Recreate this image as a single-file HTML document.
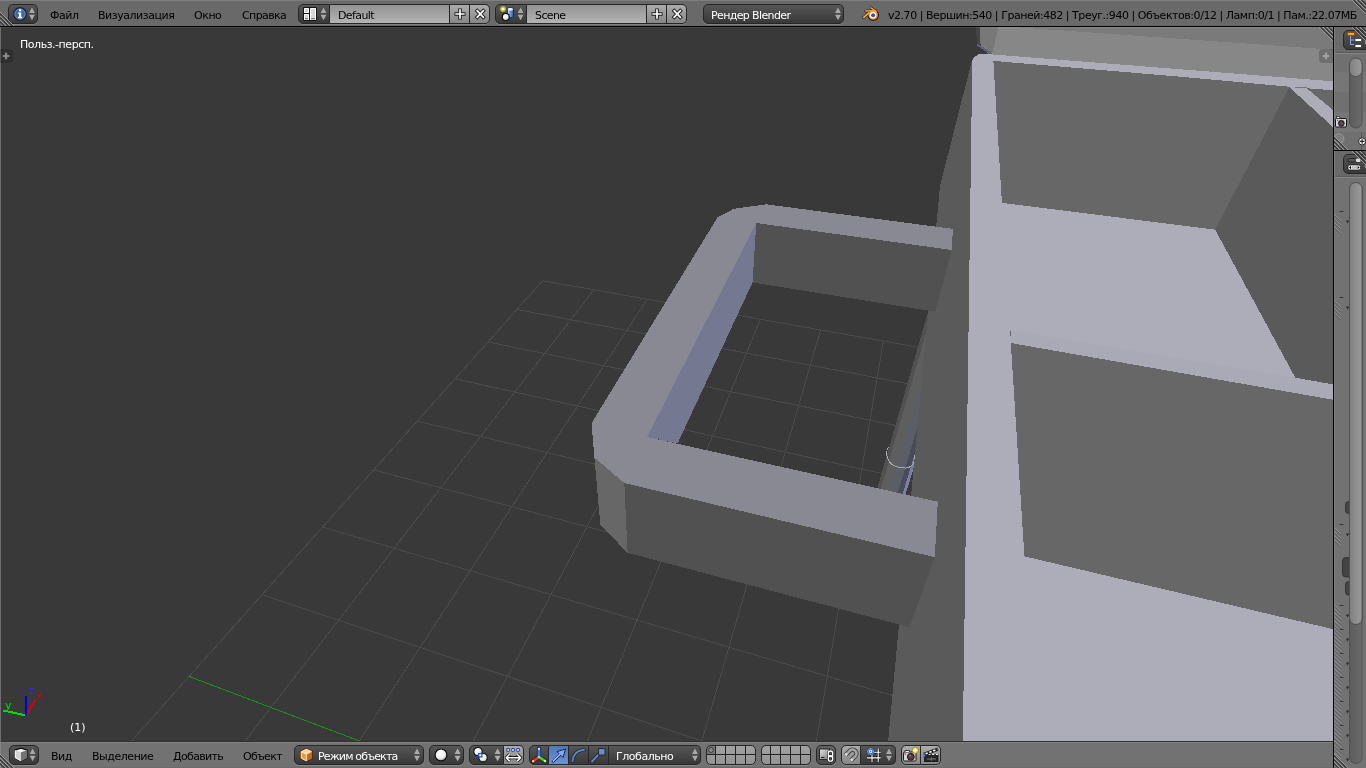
<!DOCTYPE html>
<html lang="ru"><head><meta charset="utf-8"><title>Blender</title>
<style>
html,body{margin:0;padding:0}
body{width:1366px;height:768px;overflow:hidden;position:relative;background:#727272;font-family:"DejaVu Sans","Liberation Sans",sans-serif;font-size:11px;color:#000}
.abs{position:absolute}
.hdr{position:absolute;left:0;width:1366px;background:#727272}
.t{position:absolute;white-space:nowrap;line-height:14px;height:14px;letter-spacing:-0.46px;will-change:transform}
.btn{position:absolute;box-sizing:border-box;height:20px;border:1px solid #262626;box-shadow:0 1px 0 rgba(255,255,255,.16)}
.dk{background:linear-gradient(#565656,#383838);color:#fff}
.lt{background:linear-gradient(#acacac,#868686)}
.tf{background:linear-gradient(#929292,#b4b4b4)}
.sel{background:linear-gradient(#4f78b8,#6a93d2)}
.rl{border-radius:5px 0 0 5px}.rr{border-radius:0 5px 5px 0}.ra{border-radius:5px}
.nl{border-left:none}
svg{display:block}
</style></head><body>
<svg width="1366" height="768" viewBox="0 0 1366 768" style="position:absolute;left:0;top:0" shape-rendering="auto">
<defs><clipPath id="vp"><rect x="1" y="27" width="1332" height="715"/></clipPath></defs>
<g clip-path="url(#vp)" shape-rendering="crispEdges">
<rect x="0" y="27" width="1334" height="715" fill="#393939"/>
<line x1="542.7" y1="280.7" x2="96.6" y2="780.0" stroke="#4a4a4a" stroke-width="1"/>
<line x1="593.9" y1="289.8" x2="215.0" y2="780.0" stroke="#4a4a4a" stroke-width="1"/>
<line x1="647.2" y1="299.2" x2="333.7" y2="780.0" stroke="#4a4a4a" stroke-width="1"/>
<line x1="702.6" y1="309.0" x2="452.5" y2="780.0" stroke="#4a4a4a" stroke-width="1"/>
<line x1="760.4" y1="319.3" x2="571.4" y2="780.0" stroke="#4a4a4a" stroke-width="1"/>
<line x1="820.5" y1="329.9" x2="690.6" y2="780.0" stroke="#4a4a4a" stroke-width="1"/>
<line x1="883.3" y1="341.0" x2="809.9" y2="780.0" stroke="#4a4a4a" stroke-width="1"/>
<line x1="948.9" y1="352.6" x2="929.3" y2="780.0" stroke="#4a4a4a" stroke-width="1"/>
<line x1="1017.4" y1="364.8" x2="1048.9" y2="780.0" stroke="#4a4a4a" stroke-width="1"/>
<line x1="1089.0" y1="377.5" x2="1168.7" y2="780.0" stroke="#4a4a4a" stroke-width="1"/>
<line x1="1164.1" y1="390.8" x2="1288.7" y2="780.0" stroke="#4a4a4a" stroke-width="1"/>
<line x1="1242.8" y1="404.7" x2="1360.0" y2="669.6" stroke="#4a4a4a" stroke-width="1"/>
<line x1="1325.4" y1="419.3" x2="1360.0" y2="480.6" stroke="#4a4a4a" stroke-width="1"/>
<line x1="542.7" y1="280.7" x2="1360.0" y2="425.5" stroke="#4a4a4a" stroke-width="1"/>
<line x1="516.9" y1="309.5" x2="1360.0" y2="469.6" stroke="#4a4a4a" stroke-width="1"/>
<line x1="487.9" y1="342.0" x2="1360.0" y2="520.5" stroke="#4a4a4a" stroke-width="1"/>
<line x1="455.0" y1="378.8" x2="1360.0" y2="579.6" stroke="#4a4a4a" stroke-width="1"/>
<line x1="417.3" y1="421.1" x2="1360.0" y2="649.3" stroke="#4a4a4a" stroke-width="1"/>
<line x1="373.6" y1="469.9" x2="1360.0" y2="732.5" stroke="#4a4a4a" stroke-width="1"/>
<line x1="322.6" y1="527.1" x2="1178.2" y2="780.0" stroke="#4a4a4a" stroke-width="1"/>
<line x1="262.0" y1="594.8" x2="819.6" y2="780.0" stroke="#4a4a4a" stroke-width="1"/>
<line x1="189.1" y1="676.5" x2="462.5" y2="780.0" stroke="#179319" stroke-width="1"/>
<line x1="99.5" y1="776.7" x2="106.9" y2="780.0" stroke="#4a4a4a" stroke-width="1"/>
<polygon points="979.7,27.0 1334.0,27.0 1334.0,86.0 1180.0,74.0 992.2,58.0 979.7,43.4" fill="#878787"/>
<polygon points="979.7,27.0 998.4,27.0 992.2,53.6 979.7,43.4" fill="#787878"/>
<polygon points="1013.0,27.0 1334.0,27.0 1334.0,49.8 1180.0,38.8" fill="#7a7a7a"/>
<polygon points="976.0,27.0 979.7,27.0 979.7,43.4 977.0,44.0" fill="#444"/>
<line x1="977.3" y1="44.7" x2="991.8" y2="54" stroke="#5b607b" stroke-width="2"/>
<polygon points="930.0,305.0 874.0,500.0 877.7,500.0 934.2,305.0" fill="#515151"/>
<polygon points="934.2,305.0 877.7,500.0 886.8,500.0 944.3,305.0" fill="#5e5e5e"/>
<polygon points="944.3,305.0 886.8,500.0 895.6,500.0 954.2,305.0" fill="#5a5e67"/>
<polygon points="954.2,305.0 895.6,500.0 900.8,500.0 959.9,305.0" fill="#484b5a"/>
<polygon points="959.9,305.0 900.8,500.0 903.9,500.0 963.3,305.0" fill="#7a80a1"/>
<path d="M888.4,447.3 C886,451 885.8,457 890,462.7 C893,466 897.5,467.6 905.6,468.1 C909,468 912.5,466.5 914.4,461 C915,459 915,457 914.7,455" fill="none" stroke="#a9a9b9" stroke-width="1"/>
<polygon points="971.8,61.0 940.0,186.0 888.0,742.0 963.8,742.0 973.0,61.0" fill="#5a5a5a"/>
<polygon points="756.3,223.0 951.9,250.0 935.2,311.7 752.5,282.5" fill="#515151"/>
<polygon points="756.3,223.0 752.5,282.5 677.6,443.5 647.0,437.0" fill="#747991"/>
<polygon points="717.5,217.5 733.8,208.8 766.3,204.3 952.8,228.9 951.9,250.0 756.3,223.0 647.0,437.0 937.8,501.7 934.8,557.2 624.3,483.0 594.4,457.6 591.5,423.2" fill="#898994"/>
<polygon points="624.3,483.0 934.8,557.2 909.4,627.3 627.6,552.8" fill="#515151"/>
<polygon points="594.4,457.6 624.3,483.0 627.6,552.8 600.4,525.0" fill="#676767"/>
<polygon points="972.3,60.0 975.2,56.3 979.2,54.0 982.0,53.6 1334.0,81.4 1334.0,742.0 962.8,742.0" fill="#adacb9"/>
<polygon points="993.4,60.9 1180.0,76.7 1289.4,86.7 1289.6,87.4 1215.2,229.7 1001.9,202.8" fill="#676767"/>
<polygon points="1289.4,87.2 1334.0,128.0 1334.0,384.6 1295.3,377.7 1215.2,229.7" fill="#5a5a5a"/>
<polygon points="1306.6,88.2 1334.0,90.4 1334.0,110.8" fill="#676767"/>
<polygon points="1010.8,343.0 1334.0,399.9 1334.0,629.4 1024.4,556.3" fill="#676767"/>
<polygon points="1010.8,330.0 1295.3,377.7 1334.0,384.6 1334.0,399.9 1010.8,343.0" fill="#aaaab6"/>
<line x1="1295" y1="87.5" x2="1306.5" y2="87.5" stroke="#777" stroke-width="1"/>
<line x1="1010.5" y1="330.5" x2="1010.5" y2="336" stroke="#666" stroke-width="1"/>
</g>
</svg>
<!-- ===== top info header ===== -->
<div class="hdr" style="top:0;height:26px;background:#696969"></div>
<div class="abs" style="left:0;top:0;width:1366px;height:1px;background:#7e7e7e"></div>
<div class="abs" style="left:0;top:26px;width:1366px;height:1px;background:#000"></div>

<div class="btn dk ra" style="left:8px;top:4px;width:30px"></div>
<svg class="abs" style="left:12px;top:6px" width="26" height="16" viewBox="0 0 26 16">
 <circle cx="8" cy="8" r="6.3" fill="#3f66a5" stroke="#16233d" stroke-width="1.2"/>
 <circle cx="8" cy="8" r="5" fill="none" stroke="#7f9fd0" stroke-width=".8" opacity=".7"/>
 <rect x="7" y="3.2" width="2.2" height="2.2" fill="#fff"/><path d="M6.2 6.6h3v4.2h1v1.4H6v-1.4h1V8H6.2z" fill="#fff"/>
 <path d="M20 1.4l2.9 5.5h-5.8z M20 14.300l2.9-5.5h-5.8z" fill="#a9a9a9"/>
</svg>
<div class="t" style="left:50px;top:9px">Файл</div>
<div class="t" style="left:98px;top:9px">Визуализация</div>
<div class="t" style="left:194px;top:9px">Окно</div>
<div class="t" style="left:241.5px;top:9px;letter-spacing:-0.6px">Справка</div>

<!-- screen selector -->
<div class="btn dk rl" style="left:298px;top:4px;width:32px"></div>
<svg class="abs" style="left:302px;top:6px" width="26" height="16" viewBox="0 0 26 16">
 <rect x="1" y="1" width="14" height="14" rx="1.300" fill="#141414"/>
 <g fill="#fff"><rect x="2" y="2" width="5" height="5" rx=".6"/><rect x="2" y="8" width="5" height="6" rx=".6"/><rect x="8" y="2" width="6" height="12" rx=".6"/></g>
 <g fill="#d6d6d6"><rect x="3" y="3" width="3" height="3"/><rect x="3" y="9" width="3" height="3.200"/><rect x="9" y="3" width="4" height="9.200"/></g>
 <path d="M3 12.800h3M9 12.800h4" stroke="#4a4a4a" stroke-width="1"/>
 <path d="M21.500 1.400l2.900 5.500h-5.800z M21.500 14.300l2.900-5.500h-5.800z" fill="#a9a9a9"/>
</svg>
<div class="btn tf nl" style="left:330px;top:4px;width:120px"></div>
<div class="t" style="left:337.5px;top:9px;letter-spacing:-0.6px">Default</div>
<div class="btn lt nl" style="left:450px;top:4px;width:20px"></div>
<div class="btn lt nl rr" style="left:470px;top:4px;width:20px"></div>
<svg class="abs" style="left:452px;top:6px" width="36" height="16" viewBox="0 0 36 16">
 <path d="M8 2.5v11M2.5 8h11" stroke="#1a1a1a" stroke-width="3.6"/><path d="M8 3.3v9.4M3.3 8h9.4" stroke="#fff" stroke-width="1.7"/>
 <path d="M24 3.5l8.5 9M32.5 3.5l-8.5 9" stroke="#1a1a1a" stroke-width="3.6"/><path d="M24.6 4.2l7.3 7.6M31.9 4.2l-7.3 7.6" stroke="#fff" stroke-width="1.7"/>
</svg>

<!-- scene selector -->
<div class="btn dk rl" style="left:495px;top:4px;width:32px"></div>
<svg class="abs" style="left:499px;top:5px" width="26" height="18" viewBox="0 0 26 18">
 <defs><linearGradient id="cyg" x1="0" x2="1" y1="0" y2="0"><stop offset="0" stop-color="#dfeaff"/><stop offset=".45" stop-color="#6f9be6"/><stop offset="1" stop-color="#2d5fba"/></linearGradient>
 <radialGradient id="sp2" cx=".38" cy=".35" r=".75"><stop offset="0" stop-color="#fff"/><stop offset=".65" stop-color="#e4e4e4"/><stop offset="1" stop-color="#8c8c8c"/></radialGradient></defs>
 <circle cx="4" cy="4" r="2.300" fill="#fff" stroke="#b4b224" stroke-width="1.500"/>
 <path d="M8.300 4.200c0-2 6.200-2 6.200 0v7c0 1.900-6.200 1.900-6.200 0z" fill="url(#cyg)" stroke="#122a5c" stroke-width="1"/>
 <ellipse cx="11.400" cy="4.300" rx="2.600" ry="1.300" fill="#f4f8ff"/>
 <circle cx="6.800" cy="12" r="3.500" fill="url(#sp2)" stroke="#0c0c0c" stroke-width="1.200"/>
 <path d="M21.600 2.400l2.900 5.500h-5.800z M21.600 15.300l2.900-5.500h-5.800z" fill="#a9a9a9"/>
</svg>
<div class="btn tf nl" style="left:527px;top:4px;width:120px"></div>
<div class="t" style="left:534.5px;top:9px;letter-spacing:-0.6px">Scene</div>
<div class="btn lt nl" style="left:647px;top:4px;width:20px"></div>
<div class="btn lt nl rr" style="left:667px;top:4px;width:20px"></div>
<svg class="abs" style="left:649px;top:6px" width="36" height="16" viewBox="0 0 36 16">
 <path d="M8 2.5v11M2.5 8h11" stroke="#1a1a1a" stroke-width="3.6"/><path d="M8 3.3v9.4M3.3 8h9.4" stroke="#fff" stroke-width="1.7"/>
 <path d="M24 3.5l8.5 9M32.5 3.5l-8.5 9" stroke="#1a1a1a" stroke-width="3.6"/><path d="M24.6 4.2l7.3 7.6M31.9 4.2l-7.3 7.6" stroke="#fff" stroke-width="1.7"/>
</svg>

<!-- render engine -->
<div class="btn dk ra" style="left:703px;top:4px;width:141px"></div>
<div class="t" style="left:711px;top:9px;color:#fff;letter-spacing:-0.62px">Рендер Blender</div>
<svg class="abs" style="left:833px;top:6px" width="10" height="16" viewBox="0 0 10 16"><path d="M5 1.4l2.9 5.5h-5.8z M5 14.300l2.9-5.5h-5.8z" fill="#a9a9a9"/></svg>

<!-- blender logo -->
<svg class="abs" style="left:861.500px;top:5.300px" width="18" height="18" viewBox="0 0 18 18">
 <defs><linearGradient id="blg" x1="0" y1="0" x2="1" y2="1"><stop offset="0" stop-color="#ffc27a"/><stop offset=".55" stop-color="#f6901e"/><stop offset="1" stop-color="#e87a0c"/></linearGradient></defs>
 <g fill="none" stroke="#2a1a08" stroke-linecap="round"><path d="M3.600 6.100l7.400-.3" stroke-width="2.700"/><path d="M8.900 2.900l5.300 3.400" stroke-width="2.700"/><path d="M1.700 12.500l5-4.500" stroke-width="2.900"/></g>
 <circle cx="11.250" cy="10.100" r="5.300" fill="url(#blg)" stroke="#2a1a08" stroke-width="1.100"/>
 <g fill="none" stroke="#f8a040" stroke-linecap="round"><path d="M3.600 6.100l7.400-.3" stroke-width="1.500"/><path d="M8.900 2.900l5.300 3.400" stroke-width="1.500"/><path d="M1.700 12.500l5-4.500" stroke-width="1.700"/></g>
 <circle cx="11.100" cy="10.200" r="3.200" fill="#fff"/><circle cx="11.100" cy="10.200" r="2" fill="#2458b4"/>
</svg>
<div class="t" style="left:888px;top:9px">v2.70 | Вершин:540 | Граней:482 | Треуг.:940 | Объектов:0/12 | Ламп:0/1 | Пам.:22.07МБ</div>
<!-- ===== 3D view header (bottom) ===== -->
<div class="hdr" style="top:742px;height:26px"></div>
<div class="abs" style="left:0;top:741px;width:1333px;height:1px;background:#303030"></div>
<div class="abs" style="left:0;top:742px;width:1333px;height:1px;background:#808080"></div>
<div class="abs" style="left:0;top:767px;width:1333px;height:1px;background:#6b6b6b"></div>
<div class="abs" style="left:0;top:742px;width:1px;height:26px;background:#858585"></div>
<div class="btn dk ra" style="left:9px;top:745px;width:30px"></div>
<svg class="abs" style="left:12px;top:747px" width="26" height="16" viewBox="0 0 26 16">
 <path d="M2.800 3.200L9 1.200l6.200 2v7.800L9 14.300 2.800 11z" fill="#f4f4f4" stroke="#0f0f0f" stroke-width="1.300" stroke-linejoin="round"/>
 <path d="M9 5.200l6.200-2v7.800L9 14.300z" fill="#747474"/><path d="M2.800 3.200l6.200 2v9.100L2.800 11z" fill="#d4d4d4"/><path d="M3.300 3.600v7.100l5.400 3" fill="none" stroke="#fff" stroke-width=".9"/>
 <path d="M20.600 1.400l2.900 5.500h-5.800z M20.600 14.300l2.900-5.500h-5.800z" fill="#a9a9a9"/>
</svg>
<div class="t" style="left:51px;top:750px">Вид</div>
<div class="t" style="left:92px;top:750px">Выделение</div>
<div class="t" style="left:173px;top:750px;letter-spacing:-0.66px">Добавить</div>
<div class="t" style="left:243px;top:750px;letter-spacing:-0.7px">Объект</div>

<!-- mode -->
<div class="btn dk ra" style="left:294px;top:745px;width:130px"></div>
<svg class="abs" style="left:298px;top:747px" width="17" height="16" viewBox="0 0 17 16">
 <path d="M8.400 1.600L14.200 4.300v7.200L8.400 14.400 2.700 11.500V4.300z" fill="#e8973a" stroke="#2c1604" stroke-width="1.300" stroke-linejoin="round"/>
 <path d="M8.400 1.600L14.200 4.300 8.400 7.200 2.700 4.300z" fill="#fbd3a0"/><path d="M8.400 7.200l5.800-2.900v7.200L8.400 14.400z" fill="#c06c14"/><path d="M2.700 4.300l5.700 2.900v7.200L2.700 11.500z" fill="#eb9c42"/>
 <path d="M3.300 4.600v6.600l5.100 2.600M3.300 4.600l5.100 2.600 5.200-2.600M8.400 7.200v6.600" fill="none" stroke="#fff3e2" stroke-width=".9" opacity=".9"/>
</svg>
<div class="t" style="left:318px;top:750px;color:#fff;letter-spacing:-0.82px">Режим объекта</div>
<svg class="abs" style="left:412px;top:747px" width="10" height="16" viewBox="0 0 10 16"><path d="M5 1.4l2.9 5.5h-5.8z M5 14.3l2.9-5.5h-5.8z" fill="#a9a9a9"/></svg>

<!-- shading -->
<div class="btn dk ra" style="left:429px;top:745px;width:35px"></div>
<svg class="abs" style="left:432px;top:747px" width="30" height="16" viewBox="0 0 30 16">
 <defs><radialGradient id="sph" cx=".4" cy=".32" r=".75"><stop offset="0" stop-color="#fff"/><stop offset=".6" stop-color="#f0f0f0"/><stop offset="1" stop-color="#8e8e8e"/></radialGradient></defs>
 <circle cx="9" cy="7.900" r="5.900" fill="url(#sph)" stroke="#0e0e0e" stroke-width="1.200"/>
 <path d="M25.600 1.400l3.100 5.500h-6.200z M25.600 14.300l3.100-5.500h-6.200z" fill="#adadad"/>
</svg>

<!-- pivot -->
<div class="btn dk rl" style="left:469px;top:745px;width:35px"></div>
<svg class="abs" style="left:472px;top:747px" width="30" height="16" viewBox="0 0 30 16">
 <circle cx="6" cy="4.600" r="4.200" fill="url(#sph)" stroke="#0e0e0e" stroke-width="1.100"/>
 <circle cx="11.100" cy="10.700" r="4.200" fill="url(#sph)" stroke="#0e0e0e" stroke-width="1.100"/>
 <rect x="6.600" y="6.600" width="3.300" height="3.300" fill="#fff" stroke="#1f55d8" stroke-width="1.300"/>
 <path d="M25.600 1.400l3.100 5.500h-6.200z M25.600 14.300l3.100-5.500h-6.200z" fill="#adadad"/>
</svg>
<div class="btn lt nl rr" style="left:504px;top:745px;width:20px"></div>
<svg class="abs" style="left:505px;top:747px" width="18" height="16" viewBox="0 0 18 16">
 <g fill="#fff" stroke="#2348a8" stroke-width="1.100"><circle cx="3.200" cy="2.900" r="1.500"/><circle cx="8.100" cy="2.900" r="1.500"/><circle cx="13.100" cy="2.900" r="1.500"/></g>
 <path d="M4.600 7.300L1.200 10.700l3.400 3.400M12.200 7.300l3.400 3.400-3.400 3.400M1.700 10.700h13.400" fill="none" stroke="#151515" stroke-width="3.200" stroke-linejoin="round"/>
 <path d="M4.600 7.300L1.200 10.700l3.400 3.400M12.200 7.300l3.400 3.400-3.400 3.400M1.700 10.700h13.400" fill="none" stroke="#fff" stroke-width="1.500" stroke-linejoin="round"/>
</svg>

<!-- manipulator -->
<div class="btn dk rl" style="left:529px;top:745px;width:20px"></div>
<div class="btn sel nl" style="left:549px;top:745px;width:20px"></div>
<div class="btn dk nl" style="left:569px;top:745px;width:20px"></div>
<div class="btn dk nl" style="left:589px;top:745px;width:20px"></div>
<div class="btn dk nl rr" style="left:609px;top:745px;width:92px"></div>
<svg class="abs" style="left:529px;top:746px" width="80" height="18" viewBox="0 0 80 18">
 <g stroke-linecap="round"><path d="M10 11V2.700M10 11l-6 4.400M10 11l6.200 4.200" stroke="#1a1a1a" stroke-width="4.200"/>
 <path d="M10 11l-6 4.400" stroke="#d83a22" stroke-width="2.800"/><path d="M10 11l6.200 4.200" stroke="#58c420" stroke-width="2.800"/><path d="M10 11V2.700" stroke="#3c7ceb" stroke-width="2.800"/></g>
 <circle cx="10" cy="3" r="1.100" fill="#e8f0ff"/><circle cx="4.200" cy="15.200" r="1.100" fill="#ffd8d0"/><circle cx="16" cy="15" r="1.100" fill="#e0ffd0"/><circle cx="10" cy="11" r="1" fill="#d8d8c0"/>
 <path d="M23 15.500l7.500-7.500-2.600-2.400 8.600-2.600-2.400 8.600-2.300-2.400-7.500 7.500z" fill="#84aaee" stroke="#13264a" stroke-width="1" stroke-linejoin="round"/>
 <path d="M24 15l7-7" stroke="#c4d8ff" stroke-width=".8"/>
 <path d="M43.500 15c.500-6 4-10.500 11.500-11.300" fill="none" stroke="#1c2a44" stroke-width="3.600" stroke-linecap="round"/><path d="M43.500 15c.500-6 4-10.500 11.500-11.300" fill="none" stroke="#6486be" stroke-width="1.900" stroke-linecap="round"/>
 <path d="M63 15.500l7.500-8" stroke="#1c2a44" stroke-width="3.600" stroke-linecap="round"/><path d="M63 15.500l7.500-8" stroke="#6486be" stroke-width="1.900" stroke-linecap="round"/>
 <rect x="69.500" y="2.500" width="6.500" height="6.500" fill="#6f8cc0" stroke="#1c2a44" stroke-width="1"/>
</svg>
<div class="t" style="left:616px;top:750px;color:#fff">Глобально</div>
<svg class="abs" style="left:690px;top:747px" width="10" height="16" viewBox="0 0 10 16"><path d="M5 1.4l2.9 5.5h-5.8z M5 14.3l2.9-5.5h-5.8z" fill="#a9a9a9"/></svg>

<!-- layers -->
<svg class="abs" style="left:706px;top:745px" width="106" height="22" viewBox="0 0 106 22">
 <defs><linearGradient id="lyg" x1="0" y1="0" x2="0" y2="1"><stop offset="0" stop-color="#a2a2a2"/><stop offset="1" stop-color="#939393"/></linearGradient>
 <clipPath id="lc1"><rect x=".5" y=".5" width="49" height="19" rx="4.500"/></clipPath></defs>
 <rect x=".5" y=".5" width="49" height="19" rx="4.500" fill="url(#lyg)"/><rect x="55.500" y=".5" width="49" height="19" rx="4.500" fill="url(#lyg)"/>
 <rect x="0" y="0" width="9.500" height="9.500" fill="#747474" clip-path="url(#lc1)"/>
 <g shape-rendering="crispEdges" stroke="#232323" stroke-width="1"><path d="M1 9.500h48M56 9.500h48M9.500 1v18M19.500 1v18M29.500 1v18M39.500 1v18M64.500 1v18M74.500 1v18M84.500 1v18M94.500 1v18"/></g>
 <g fill="none" stroke="#262626" stroke-width="1"><rect x=".5" y=".5" width="49" height="19" rx="4.500"/><rect x="55.500" y=".5" width="49" height="19" rx="4.500"/></g>
 <path d="M3 20.500h44M58 20.500h44" stroke="rgba(255,255,255,.16)" stroke-width="1"/>
 <circle cx="5" cy="5" r="2.300" fill="#b0b0b0" stroke="#2c2c2c" stroke-width="1"/><circle cx="5" cy="5" r=".8" fill="#555"/>
</svg>

<!-- lock -->
<div class="btn ra" style="left:816px;top:745px;width:20px;background:linear-gradient(#626262,#4b4b4b)"></div>
<svg class="abs" style="left:817px;top:746px" width="20" height="18" viewBox="0 0 20 18">
 <defs><linearGradient id="lkg" x1="0" y1="0" x2="1" y2="1"><stop offset="0" stop-color="#e4e4e4"/><stop offset="1" stop-color="#7c7c7c"/></linearGradient></defs>
 <rect x="2.500" y="3" width="10" height="10.500" fill="url(#lkg)" stroke="#262626" stroke-width="1"/><path d="M4 11.500h3.500" stroke="#2a2a2a" stroke-width="1.200"/>
 <g fill="none"><rect x="11.300" y="5" width="4.400" height="5.600" rx="2.200" stroke="#222" stroke-width="2.600"/><rect x="11.300" y="9.600" width="4.400" height="5.600" rx="2.200" stroke="#222" stroke-width="2.600"/>
 <rect x="11.300" y="5" width="4.400" height="5.600" rx="2.200" stroke="#fff" stroke-width="1.300"/><rect x="11.300" y="9.600" width="4.400" height="5.600" rx="2.200" stroke="#fff" stroke-width="1.300"/></g>
</svg>

<!-- snap -->
<div class="btn lt rl" style="left:841px;top:745px;width:20px"></div>
<div class="btn dk nl rr" style="left:861px;top:745px;width:35px"></div>
<svg class="abs" style="left:842px;top:746px" width="54" height="18" viewBox="0 0 54 18">
 <g fill="none" stroke-linecap="butt"><path d="M3.600 9L8 4.600a3.900 3.900 0 0 1 5.500 5.500L9.100 14.500" stroke="#3c3c3c" stroke-width="4.400"/>
 <path d="M3.600 9L8 4.600a3.900 3.900 0 0 1 5.500 5.500L9.100 14.500" stroke="#a4a4a4" stroke-width="2.600"/>
 <path d="M3.600 9l1.300-1.300M9.100 14.500l1.300-1.300" stroke="#e6e6e6" stroke-width="2.600"/></g>
 <path d="M30 2.500v13.500M36.200 2.500v13.500M25 6.200h13.700M25 11.900h13.700" stroke="#151515" stroke-width="2.600"/><path d="M30 2.500v13.500M36.200 2.500v13.500M25 6.200h13.700M25 11.900h13.700" stroke="#fff" stroke-width="1.100"/>
 <circle cx="28.600" cy="5.400" r="3.500" fill="#fff" stroke="#1a2c55" stroke-width=".7"/><circle cx="28.600" cy="5.400" r="2.300" fill="#fff" stroke="#3a74e0" stroke-width="1.300"/><circle cx="28.600" cy="5.400" r=".8" fill="#3a74e0"/>
 <path d="M47 2.400l2.900 5.500h-5.800z M47 15.300l2.900-5.500h-5.800z" fill="#a9a9a9"/>
</svg>

<!-- render buttons -->
<div class="btn lt rl" style="left:901px;top:745px;width:20px"></div>
<div class="btn lt nl rr" style="left:921px;top:745px;width:20px"></div>
<svg class="abs" style="left:901px;top:746px" width="40" height="18" viewBox="0 0 40 18">
 <rect x="2.500" y="6" width="12.500" height="9" rx="1.200" fill="#d4d4d4" stroke="#1a1a1a" stroke-width="1"/><path d="M4 6V4.500h4.500V6" fill="#e8e8e8" stroke="#1a1a1a" stroke-width=".8"/>
 <rect x="3.500" y="7.300" width="1.300" height="1.300" fill="#e01818"/>
 <circle cx="9.800" cy="10.800" r="3.500" fill="#3d3d44" stroke="#111" stroke-width=".8"/><circle cx="10.300" cy="11.300" r="1.700" fill="#8a3030"/><circle cx="9" cy="9.800" r=".8" fill="#9ab"/>
 <circle cx="14.300" cy="4.300" r="3.200" fill="#f3d44a" stroke="#8a6a10" stroke-width=".6"/><path d="M14.300 2.300v4M12.300 4.300h4" stroke="#fff" stroke-width="1.200"/>
 <rect x="23.500" y="8.500" width="13.500" height="7" fill="#262626" stroke="#111" stroke-width=".8"/><path d="M23.500 8.500h13.500" stroke="#eee" stroke-width="1.200" stroke-dasharray="2.200 1.600"/>
 <path d="M23 7l13.200-5 .9 2.400-13.200 5z" fill="#1a1a1a" stroke="#111" stroke-width=".6"/><path d="M24.500 7.800l11.800-4.500" stroke="#f2f2f2" stroke-width="1.700" stroke-dasharray="2.400 1.700"/>
 <path d="M26 13h9M30.500 11.300v3.400" stroke="#7a7a7a" stroke-width="1"/><path d="M22.800 6.500l1.800 3.600-1.800 1.200z" fill="#6fa0ec" stroke="#1b3a78" stroke-width=".5"/>
</svg>
<!-- ===== right strip (outliner + properties) ===== -->
<svg class="abs" style="left:0;top:0" width="1366" height="768" viewBox="0 0 1366 768">
<defs><linearGradient id="thumb" x1="0" x2="1" y1="0" y2="0"><stop offset="0" stop-color="#7f7f7f"/><stop offset="1" stop-color="#9b9b9b"/></linearGradient>
<linearGradient id="track" x1="0" x2="1" y1="0" y2="0"><stop offset="0" stop-color="#5c5c5c"/><stop offset="1" stop-color="#6a6a6a"/></linearGradient>
<linearGradient id="dkb" x1="0" x2="0" y1="0" y2="1"><stop offset="0" stop-color="#565656"/><stop offset="1" stop-color="#383838"/></linearGradient>
<clipPath id="rs"><rect x="1334" y="27" width="32" height="741"/></clipPath></defs>
<rect x="1333" y="26" width="1" height="742" fill="#000"/>
<rect x="1334" y="27" width="32" height="741" fill="#727272"/>
<rect x="1334" y="27" width="32" height="25" fill="#696969"/><rect x="1334" y="151" width="32" height="25" fill="#696969"/>
<rect x="1334" y="72" width="32" height="20" fill="#767676"/>
<rect x="1334" y="112" width="32" height="20" fill="#767676"/>
<rect x="1334" y="54" width="32" height="18" fill="#707070"/>
<rect x="1334" y="92" width="32" height="20" fill="#707070"/>
<rect x="1334" y="132" width="32" height="18" fill="#707070"/>
<rect x="1334" y="27" width="1" height="741" fill="#808080"/>
<g clip-path="url(#rs)">
<rect x="1335" y="52" width="31" height="1" fill="#5c5c5c"/><rect x="1335" y="53" width="31" height="1" fill="#868686"/>
<rect x="1343.500" y="30.500" width="30" height="19" rx="4.500" fill="url(#dkb)" stroke="#262626"/>
<rect x="1347.500" y="32.500" width="7" height="3" fill="#f7a53a" stroke="#8a4a08" stroke-width=".8"/>
<path d="M1350.500 36v8.500h4M1350.500 40h4" fill="none" stroke="#8fa6d8" stroke-width="1"/>
<rect x="1355" y="38.500" width="6.500" height="3" fill="#fff" stroke="#2a2a2a" stroke-width=".7"/><rect x="1355" y="44.500" width="6.500" height="3" fill="#fff" stroke="#2a2a2a" stroke-width=".7"/>
<path d="M1364.300 41.500l2.900 0-1.450 3z" fill="#a9a9a9"/>
<rect x="1349.500" y="58" width="12.500" height="70" rx="6.200" fill="url(#track)" stroke="#4a4a4a" stroke-width=".8"/>
<rect x="1349.500" y="58" width="12.500" height="18.500" rx="6.200" fill="url(#thumb)" stroke="#4a4a4a" stroke-width=".8"/>
<rect x="1335.500" y="118.500" width="11" height="8.500" rx="1" fill="#d8d8d8" stroke="#151515" stroke-width="1"/><rect x="1336.500" y="116.500" width="3" height="2" fill="#eee" stroke="#151515" stroke-width=".6"/>
<circle cx="1341.300" cy="123.300" r="3" fill="#3a3f55" stroke="#111" stroke-width=".7"/><circle cx="1341.600" cy="123.600" r="1.400" fill="#a03a3a"/><rect x="1337" y="119.700" width="1.200" height="1.200" fill="#e01010"/>
<circle cx="1338.900" cy="138.700" r="5" fill="#7e7e7e" stroke="#989898" stroke-width=".9"/>
<path d="M1361.500 132v18" stroke="#555" stroke-width="1"/>
<circle cx="1362.100" cy="141.400" r="3.600" fill="#f2f2f2" stroke="#222" stroke-width="1"/><path d="M1362.100 139v4.800M1359.700 141.400h4.800" stroke="#222" stroke-width="1.100"/>
<path d="M1334 145.5L1338.5 150" stroke="#363636" stroke-width="1.2"/><path d="M1334 144L1340 150" stroke="#9c9c9c" stroke-width="1"/><path d="M1334 141.5L1342.5 150" stroke="#363636" stroke-width="1.2"/><path d="M1334 140L1344 150" stroke="#9c9c9c" stroke-width="1"/><path d="M1334 137.5L1346.5 150" stroke="#363636" stroke-width="1.2"/><path d="M1334 136L1348 150" stroke="#9c9c9c" stroke-width="1"/>
<path d="M1361.5 27L1366 31.5" stroke="#363636" stroke-width="1.2"/><path d="M1360 27L1366 33" stroke="#9c9c9c" stroke-width="1"/><path d="M1357.5 27L1366 35.5" stroke="#363636" stroke-width="1.2"/><path d="M1356 27L1366 37" stroke="#9c9c9c" stroke-width="1"/><path d="M1353.5 27L1366 39.5" stroke="#363636" stroke-width="1.2"/><path d="M1352 27L1366 41" stroke="#9c9c9c" stroke-width="1"/>
<rect x="1334" y="150" width="32" height="1" fill="#000"/>
<rect x="1335" y="176" width="31" height="1" fill="#5c5c5c"/><rect x="1335" y="177" width="31" height="1" fill="#868686"/>
<rect x="1343.500" y="154.500" width="30" height="19" rx="4.500" fill="url(#dkb)" stroke="#262626"/>
<rect x="1348" y="158.500" width="12.500" height="3.500" rx="1.200" fill="#555" stroke="#222" stroke-width=".8"/><rect x="1356" y="158.500" width="4.500" height="3.500" rx="1" fill="#ddd"/>
<rect x="1348" y="165" width="12.500" height="5" rx="1.800" fill="#fff" stroke="#222" stroke-width=".8"/><rect x="1351.500" y="166.300" width="5.500" height="2.500" fill="#bbb"/>
<path d="M1349 167.500l2-1.800v3.600zM1359.600 167.500l-2-1.800v3.600z" fill="#111"/>
<path d="M1364.300 165.500l2.900 0-1.450 3z" fill="#a9a9a9"/>
<path d="M1361.5 151L1366 155.5" stroke="#363636" stroke-width="1.2"/><path d="M1360 151L1366 157" stroke="#9c9c9c" stroke-width="1"/><path d="M1357.5 151L1366 159.5" stroke="#363636" stroke-width="1.2"/><path d="M1356 151L1366 161" stroke="#9c9c9c" stroke-width="1"/><path d="M1353.5 151L1366 163.5" stroke="#363636" stroke-width="1.2"/><path d="M1352 151L1366 165" stroke="#9c9c9c" stroke-width="1"/>
<rect x="1349.500" y="182.500" width="12.500" height="581" rx="6.200" fill="url(#track)" stroke="#4a4a4a" stroke-width=".8"/>
<rect x="1349.500" y="182.500" width="12.500" height="442" rx="6.200" fill="url(#thumb)" stroke="#4a4a4a" stroke-width=".8"/>
<path d="M1339.500 211.5h4" stroke="#333" stroke-width="1"/><path d="M1334.500 214.5l6.500 6.500" stroke="#8f8f8f" stroke-width="1"/><path d="M1334.500 215.8l6.500 6.500" stroke="#5e5e5e" stroke-width="1"/><path d="M1334.500 218.5l6.500 6.500" stroke="#8f8f8f" stroke-width="1"/><path d="M1334.500 219.8l6.500 6.500" stroke="#5e5e5e" stroke-width="1"/><path d="M1334.500 222.5l6.500 6.500" stroke="#8f8f8f" stroke-width="1"/><path d="M1334.500 223.8l6.500 6.500" stroke="#5e5e5e" stroke-width="1"/><path d="M1334.500 226.5l6.500 6.500" stroke="#8f8f8f" stroke-width="1"/><path d="M1334.500 227.8l6.500 6.500" stroke="#5e5e5e" stroke-width="1"/><path d="M1346 220.5h3.200l-1.600 3z" fill="#2a2a2a"/>
<path d="M1339.500 297.5h4" stroke="#333" stroke-width="1"/><path d="M1334.500 300.5l6.500 6.500" stroke="#8f8f8f" stroke-width="1"/><path d="M1334.500 301.8l6.500 6.500" stroke="#5e5e5e" stroke-width="1"/><path d="M1334.500 304.5l6.500 6.500" stroke="#8f8f8f" stroke-width="1"/><path d="M1334.500 305.8l6.500 6.500" stroke="#5e5e5e" stroke-width="1"/><path d="M1334.500 308.5l6.500 6.500" stroke="#8f8f8f" stroke-width="1"/><path d="M1334.500 309.8l6.500 6.500" stroke="#5e5e5e" stroke-width="1"/><path d="M1334.500 312.5l6.500 6.500" stroke="#8f8f8f" stroke-width="1"/><path d="M1334.500 313.8l6.500 6.500" stroke="#5e5e5e" stroke-width="1"/><path d="M1346 306.5h3.200l-1.600 3z" fill="#2a2a2a"/>
<path d="M1339.500 524.5h4" stroke="#333" stroke-width="1"/><path d="M1334.500 527.5l6.500 6.500" stroke="#8f8f8f" stroke-width="1"/><path d="M1334.500 528.8l6.500 6.500" stroke="#5e5e5e" stroke-width="1"/><path d="M1334.500 531.5l6.500 6.500" stroke="#8f8f8f" stroke-width="1"/><path d="M1334.500 532.8l6.500 6.500" stroke="#5e5e5e" stroke-width="1"/><path d="M1334.500 535.5l6.500 6.500" stroke="#8f8f8f" stroke-width="1"/><path d="M1334.500 536.8l6.500 6.500" stroke="#5e5e5e" stroke-width="1"/><path d="M1334.500 539.5l6.500 6.500" stroke="#8f8f8f" stroke-width="1"/><path d="M1334.500 540.8l6.500 6.500" stroke="#5e5e5e" stroke-width="1"/><path d="M1346 533.5h3.200l-1.600 3z" fill="#2a2a2a"/>
<path d="M1339.500 605.5h4" stroke="#333" stroke-width="1"/><path d="M1334.500 608.5l6.500 6.500" stroke="#8f8f8f" stroke-width="1"/><path d="M1334.500 609.8l6.500 6.500" stroke="#5e5e5e" stroke-width="1"/><path d="M1334.500 612.5l6.500 6.500" stroke="#8f8f8f" stroke-width="1"/><path d="M1334.500 613.8l6.500 6.500" stroke="#5e5e5e" stroke-width="1"/><path d="M1334.500 616.5l6.500 6.500" stroke="#8f8f8f" stroke-width="1"/><path d="M1334.500 617.8l6.500 6.500" stroke="#5e5e5e" stroke-width="1"/><path d="M1334.500 620.5l6.500 6.500" stroke="#8f8f8f" stroke-width="1"/><path d="M1334.500 621.8l6.500 6.500" stroke="#5e5e5e" stroke-width="1"/><path d="M1346 614.5h3.200l-1.600 3z" fill="#2a2a2a"/>
<path d="M1339.500 629.5h4" stroke="#333" stroke-width="1"/><path d="M1334.500 632.5l6.500 6.500" stroke="#8f8f8f" stroke-width="1"/><path d="M1334.500 633.8l6.500 6.500" stroke="#5e5e5e" stroke-width="1"/><path d="M1334.500 636.5l6.500 6.500" stroke="#8f8f8f" stroke-width="1"/><path d="M1334.500 637.8l6.500 6.500" stroke="#5e5e5e" stroke-width="1"/><path d="M1334.500 640.5l6.500 6.500" stroke="#8f8f8f" stroke-width="1"/><path d="M1334.500 641.8l6.500 6.500" stroke="#5e5e5e" stroke-width="1"/><path d="M1334.500 644.5l6.500 6.500" stroke="#8f8f8f" stroke-width="1"/><path d="M1334.500 645.8l6.500 6.500" stroke="#5e5e5e" stroke-width="1"/><path d="M1346 638.5h3.200l-1.600 3z" fill="#2a2a2a"/>
<path d="M1339.500 653.5h4" stroke="#333" stroke-width="1"/><path d="M1334.500 656.5l6.500 6.500" stroke="#8f8f8f" stroke-width="1"/><path d="M1334.500 657.8l6.500 6.500" stroke="#5e5e5e" stroke-width="1"/><path d="M1334.500 660.5l6.500 6.500" stroke="#8f8f8f" stroke-width="1"/><path d="M1334.500 661.8l6.500 6.500" stroke="#5e5e5e" stroke-width="1"/><path d="M1334.500 664.5l6.500 6.500" stroke="#8f8f8f" stroke-width="1"/><path d="M1334.500 665.8l6.500 6.500" stroke="#5e5e5e" stroke-width="1"/><path d="M1334.500 668.5l6.500 6.500" stroke="#8f8f8f" stroke-width="1"/><path d="M1334.500 669.8l6.500 6.500" stroke="#5e5e5e" stroke-width="1"/><path d="M1346 662.5h3.200l-1.600 3z" fill="#2a2a2a"/>
<path d="M1339.500 677.5h4" stroke="#333" stroke-width="1"/><path d="M1334.500 680.5l6.500 6.500" stroke="#8f8f8f" stroke-width="1"/><path d="M1334.500 681.8l6.500 6.500" stroke="#5e5e5e" stroke-width="1"/><path d="M1334.500 684.5l6.500 6.500" stroke="#8f8f8f" stroke-width="1"/><path d="M1334.500 685.8l6.500 6.500" stroke="#5e5e5e" stroke-width="1"/><path d="M1334.500 688.5l6.500 6.500" stroke="#8f8f8f" stroke-width="1"/><path d="M1334.500 689.8l6.500 6.500" stroke="#5e5e5e" stroke-width="1"/><path d="M1334.500 692.5l6.500 6.500" stroke="#8f8f8f" stroke-width="1"/><path d="M1334.500 693.8l6.500 6.500" stroke="#5e5e5e" stroke-width="1"/><path d="M1346 686.5h3.200l-1.600 3z" fill="#2a2a2a"/>
<path d="M1339.500 701.5h4" stroke="#333" stroke-width="1"/><path d="M1334.500 704.5l6.500 6.500" stroke="#8f8f8f" stroke-width="1"/><path d="M1334.500 705.8l6.500 6.500" stroke="#5e5e5e" stroke-width="1"/><path d="M1334.500 708.5l6.500 6.500" stroke="#8f8f8f" stroke-width="1"/><path d="M1334.500 709.8l6.500 6.500" stroke="#5e5e5e" stroke-width="1"/><path d="M1334.500 712.5l6.500 6.500" stroke="#8f8f8f" stroke-width="1"/><path d="M1334.500 713.8l6.500 6.500" stroke="#5e5e5e" stroke-width="1"/><path d="M1334.500 716.5l6.500 6.500" stroke="#8f8f8f" stroke-width="1"/><path d="M1334.500 717.8l6.500 6.500" stroke="#5e5e5e" stroke-width="1"/><path d="M1346 710.5h3.200l-1.600 3z" fill="#2a2a2a"/>
<path d="M1339.500 725.5h4" stroke="#333" stroke-width="1"/><path d="M1334.500 728.5l6.500 6.500" stroke="#8f8f8f" stroke-width="1"/><path d="M1334.500 729.8l6.500 6.500" stroke="#5e5e5e" stroke-width="1"/><path d="M1334.500 732.5l6.500 6.500" stroke="#8f8f8f" stroke-width="1"/><path d="M1334.500 733.8l6.500 6.500" stroke="#5e5e5e" stroke-width="1"/><path d="M1334.500 736.5l6.500 6.500" stroke="#8f8f8f" stroke-width="1"/><path d="M1334.500 737.8l6.500 6.500" stroke="#5e5e5e" stroke-width="1"/><path d="M1334.500 740.5l6.500 6.500" stroke="#8f8f8f" stroke-width="1"/><path d="M1334.500 741.8l6.500 6.500" stroke="#5e5e5e" stroke-width="1"/><path d="M1346 734.5h3.200l-1.600 3z" fill="#2a2a2a"/>
<path d="M1339.500 749.5h4" stroke="#333" stroke-width="1"/><path d="M1334.500 752.5l6.500 6.500" stroke="#8f8f8f" stroke-width="1"/><path d="M1334.500 753.8l6.500 6.500" stroke="#5e5e5e" stroke-width="1"/><path d="M1334.500 756.5l6.500 6.500" stroke="#8f8f8f" stroke-width="1"/><path d="M1334.500 757.8l6.500 6.500" stroke="#5e5e5e" stroke-width="1"/><path d="M1334.500 760.5l6.500 6.500" stroke="#8f8f8f" stroke-width="1"/><path d="M1334.500 761.8l6.500 6.500" stroke="#5e5e5e" stroke-width="1"/><path d="M1334.500 764.5l6.500 6.500" stroke="#8f8f8f" stroke-width="1"/><path d="M1334.500 765.8l6.500 6.500" stroke="#5e5e5e" stroke-width="1"/><path d="M1346 758.5h3.200l-1.600 3z" fill="#2a2a2a"/>
<path d="M1334.500 605l6.500 6.500" stroke="#8f8f8f" stroke-width="1"/><path d="M1334.500 606.3l6.500 6.500" stroke="#5e5e5e" stroke-width="1"/>
<path d="M1334.500 609l6.500 6.500" stroke="#8f8f8f" stroke-width="1"/><path d="M1334.500 610.3l6.500 6.500" stroke="#5e5e5e" stroke-width="1"/>
<path d="M1334.500 613l6.500 6.500" stroke="#8f8f8f" stroke-width="1"/><path d="M1334.500 614.3l6.500 6.500" stroke="#5e5e5e" stroke-width="1"/>
<path d="M1334.500 617l6.500 6.500" stroke="#8f8f8f" stroke-width="1"/><path d="M1334.500 618.3l6.500 6.500" stroke="#5e5e5e" stroke-width="1"/>
<path d="M1334.500 621l6.500 6.500" stroke="#8f8f8f" stroke-width="1"/><path d="M1334.500 622.3l6.500 6.500" stroke="#5e5e5e" stroke-width="1"/>
<path d="M1334.500 625l6.500 6.500" stroke="#8f8f8f" stroke-width="1"/><path d="M1334.500 626.3l6.500 6.500" stroke="#5e5e5e" stroke-width="1"/>
<path d="M1334.500 629l6.500 6.500" stroke="#8f8f8f" stroke-width="1"/><path d="M1334.500 630.3l6.500 6.500" stroke="#5e5e5e" stroke-width="1"/>
<path d="M1334.500 633l6.500 6.500" stroke="#8f8f8f" stroke-width="1"/><path d="M1334.500 634.3l6.500 6.500" stroke="#5e5e5e" stroke-width="1"/>
<path d="M1334.500 637l6.500 6.500" stroke="#8f8f8f" stroke-width="1"/><path d="M1334.500 638.3l6.500 6.500" stroke="#5e5e5e" stroke-width="1"/>
<path d="M1334.500 641l6.500 6.500" stroke="#8f8f8f" stroke-width="1"/><path d="M1334.500 642.3l6.500 6.500" stroke="#5e5e5e" stroke-width="1"/>
<path d="M1334.500 645l6.500 6.500" stroke="#8f8f8f" stroke-width="1"/><path d="M1334.500 646.3l6.500 6.500" stroke="#5e5e5e" stroke-width="1"/>
<path d="M1334.500 649l6.500 6.500" stroke="#8f8f8f" stroke-width="1"/><path d="M1334.500 650.3l6.500 6.500" stroke="#5e5e5e" stroke-width="1"/>
<path d="M1334.500 653l6.500 6.500" stroke="#8f8f8f" stroke-width="1"/><path d="M1334.500 654.3l6.500 6.500" stroke="#5e5e5e" stroke-width="1"/>
<path d="M1334.500 657l6.500 6.500" stroke="#8f8f8f" stroke-width="1"/><path d="M1334.500 658.3l6.500 6.500" stroke="#5e5e5e" stroke-width="1"/>
<path d="M1334.500 661l6.500 6.500" stroke="#8f8f8f" stroke-width="1"/><path d="M1334.500 662.3l6.500 6.500" stroke="#5e5e5e" stroke-width="1"/>
<path d="M1334.500 665l6.500 6.500" stroke="#8f8f8f" stroke-width="1"/><path d="M1334.500 666.3l6.500 6.500" stroke="#5e5e5e" stroke-width="1"/>
<path d="M1334.500 669l6.500 6.500" stroke="#8f8f8f" stroke-width="1"/><path d="M1334.500 670.3l6.500 6.500" stroke="#5e5e5e" stroke-width="1"/>
<path d="M1334.500 673l6.500 6.500" stroke="#8f8f8f" stroke-width="1"/><path d="M1334.500 674.3l6.500 6.500" stroke="#5e5e5e" stroke-width="1"/>
<path d="M1334.500 677l6.500 6.500" stroke="#8f8f8f" stroke-width="1"/><path d="M1334.500 678.3l6.500 6.500" stroke="#5e5e5e" stroke-width="1"/>
<path d="M1334.500 681l6.500 6.500" stroke="#8f8f8f" stroke-width="1"/><path d="M1334.500 682.3l6.500 6.500" stroke="#5e5e5e" stroke-width="1"/>
<path d="M1334.500 685l6.500 6.500" stroke="#8f8f8f" stroke-width="1"/><path d="M1334.500 686.3l6.500 6.500" stroke="#5e5e5e" stroke-width="1"/>
<path d="M1334.500 689l6.500 6.500" stroke="#8f8f8f" stroke-width="1"/><path d="M1334.500 690.3l6.500 6.500" stroke="#5e5e5e" stroke-width="1"/>
<path d="M1334.500 693l6.500 6.500" stroke="#8f8f8f" stroke-width="1"/><path d="M1334.500 694.3l6.500 6.500" stroke="#5e5e5e" stroke-width="1"/>
<path d="M1334.500 697l6.500 6.500" stroke="#8f8f8f" stroke-width="1"/><path d="M1334.500 698.3l6.500 6.500" stroke="#5e5e5e" stroke-width="1"/>
<path d="M1334.500 701l6.500 6.500" stroke="#8f8f8f" stroke-width="1"/><path d="M1334.500 702.3l6.500 6.500" stroke="#5e5e5e" stroke-width="1"/>
<path d="M1334.500 705l6.500 6.500" stroke="#8f8f8f" stroke-width="1"/><path d="M1334.500 706.3l6.500 6.500" stroke="#5e5e5e" stroke-width="1"/>
<path d="M1334.500 709l6.500 6.500" stroke="#8f8f8f" stroke-width="1"/><path d="M1334.500 710.3l6.500 6.500" stroke="#5e5e5e" stroke-width="1"/>
<path d="M1334.500 713l6.500 6.500" stroke="#8f8f8f" stroke-width="1"/><path d="M1334.500 714.3l6.500 6.500" stroke="#5e5e5e" stroke-width="1"/>
<path d="M1334.500 717l6.500 6.500" stroke="#8f8f8f" stroke-width="1"/><path d="M1334.500 718.3l6.500 6.500" stroke="#5e5e5e" stroke-width="1"/>
<path d="M1334.500 721l6.500 6.500" stroke="#8f8f8f" stroke-width="1"/><path d="M1334.500 722.3l6.500 6.500" stroke="#5e5e5e" stroke-width="1"/>
<path d="M1334.500 725l6.500 6.500" stroke="#8f8f8f" stroke-width="1"/><path d="M1334.500 726.3l6.500 6.500" stroke="#5e5e5e" stroke-width="1"/>
<path d="M1334.500 729l6.500 6.500" stroke="#8f8f8f" stroke-width="1"/><path d="M1334.500 730.3l6.500 6.500" stroke="#5e5e5e" stroke-width="1"/>
<path d="M1334.500 733l6.500 6.500" stroke="#8f8f8f" stroke-width="1"/><path d="M1334.500 734.3l6.500 6.500" stroke="#5e5e5e" stroke-width="1"/>
<path d="M1334.500 737l6.500 6.500" stroke="#8f8f8f" stroke-width="1"/><path d="M1334.500 738.3l6.500 6.500" stroke="#5e5e5e" stroke-width="1"/>
<path d="M1334.500 741l6.500 6.500" stroke="#8f8f8f" stroke-width="1"/><path d="M1334.500 742.3l6.500 6.500" stroke="#5e5e5e" stroke-width="1"/>
<path d="M1334.500 745l6.500 6.500" stroke="#8f8f8f" stroke-width="1"/><path d="M1334.500 746.3l6.500 6.500" stroke="#5e5e5e" stroke-width="1"/>
<path d="M1334.500 749l6.500 6.500" stroke="#8f8f8f" stroke-width="1"/><path d="M1334.500 750.3l6.500 6.500" stroke="#5e5e5e" stroke-width="1"/>
<path d="M1334.500 753l6.500 6.500" stroke="#8f8f8f" stroke-width="1"/><path d="M1334.500 754.3l6.500 6.500" stroke="#5e5e5e" stroke-width="1"/>
<path d="M1334.500 757l6.500 6.500" stroke="#8f8f8f" stroke-width="1"/><path d="M1334.500 758.3l6.500 6.500" stroke="#5e5e5e" stroke-width="1"/>
<path d="M1334.500 761l6.500 6.500" stroke="#8f8f8f" stroke-width="1"/><path d="M1334.500 762.3l6.500 6.500" stroke="#5e5e5e" stroke-width="1"/>
<path d="M1334.500 765l6.500 6.500" stroke="#8f8f8f" stroke-width="1"/><path d="M1334.500 766.3l6.500 6.500" stroke="#5e5e5e" stroke-width="1"/>
<rect x="1345.500" y="501.500" width="10" height="12" rx="3" fill="#444" stroke="#2a2a2a" stroke-width=".8"/>
<rect x="1342.500" y="557.500" width="12" height="19.500" rx="3.500" fill="#444" stroke="#2a2a2a" stroke-width=".8"/>
<rect x="1345.500" y="581.500" width="10" height="13.500" rx="3" fill="#444" stroke="#2a2a2a" stroke-width=".8"/>
<rect x="1349.500" y="182.500" width="12.500" height="442" rx="6.200" fill="url(#thumb)" stroke="#4a4a4a" stroke-width=".8"/>
<path d="M1334 763.5L1338.5 768" stroke="#363636" stroke-width="1.2"/><path d="M1334 762L1340 768" stroke="#9c9c9c" stroke-width="1"/><path d="M1334 759.5L1342.5 768" stroke="#363636" stroke-width="1.2"/><path d="M1334 758L1344 768" stroke="#9c9c9c" stroke-width="1"/><path d="M1334 755.5L1346.5 768" stroke="#363636" stroke-width="1.2"/><path d="M1334 754L1348 768" stroke="#9c9c9c" stroke-width="1"/>
</g>
<path d="M1361.5 0L1366 4.5" stroke="#363636" stroke-width="1.2"/><path d="M1360 0L1366 6" stroke="#9c9c9c" stroke-width="1"/><path d="M1357.5 0L1366 8.5" stroke="#363636" stroke-width="1.2"/><path d="M1356 0L1366 10" stroke="#9c9c9c" stroke-width="1"/><path d="M1353.5 0L1366 12.5" stroke="#363636" stroke-width="1.2"/><path d="M1352 0L1366 14" stroke="#9c9c9c" stroke-width="1"/>
<path d="M0 21.5L4.5 26" stroke="#363636" stroke-width="1.2"/><path d="M0 20L6 26" stroke="#9c9c9c" stroke-width="1"/><path d="M0 17.5L8.5 26" stroke="#363636" stroke-width="1.2"/><path d="M0 16L10 26" stroke="#9c9c9c" stroke-width="1"/><path d="M0 13.5L12.5 26" stroke="#363636" stroke-width="1.2"/><path d="M0 12L14 26" stroke="#9c9c9c" stroke-width="1"/>
<path d="M1328.5 27L1333 31.5" stroke="#363636" stroke-width="1.2"/><path d="M1327 27L1333 33" stroke="#9c9c9c" stroke-width="1"/><path d="M1324.5 27L1333 35.5" stroke="#363636" stroke-width="1.2"/><path d="M1323 27L1333 37" stroke="#9c9c9c" stroke-width="1"/><path d="M1320.5 27L1333 39.5" stroke="#363636" stroke-width="1.2"/><path d="M1319 27L1333 41" stroke="#9c9c9c" stroke-width="1"/>
<path d="M0 763.5L4.5 768" stroke="#363636" stroke-width="1.2"/><path d="M0 762L6 768" stroke="#9c9c9c" stroke-width="1"/><path d="M0 759.5L8.5 768" stroke="#363636" stroke-width="1.2"/><path d="M0 758L10 768" stroke="#9c9c9c" stroke-width="1"/><path d="M0 755.5L12.5 768" stroke="#363636" stroke-width="1.2"/><path d="M0 754L14 768" stroke="#9c9c9c" stroke-width="1"/>
</svg>
<!-- ===== viewport overlays ===== -->
<div class="abs" style="left:0;top:27px;width:1px;height:715px;background:#6e6e6e"></div>
<div class="abs" style="left:1px;top:27px;width:1332px;height:1px;background:rgba(255,255,255,.07)"></div>
<div class="t" style="left:20px;top:38px;color:#fff">Польз.-персп.</div>
<div class="t" style="left:70px;top:721px;color:#fff;letter-spacing:0">(1)</div>
<div class="abs" style="left:0;top:49px;width:13px;height:14px;border-radius:0 4px 4px 0;background:rgba(0,0,0,.17)"></div>
<svg class="abs" style="left:0;top:49px" width="14" height="14" viewBox="0 49 14 14"><path d="M6 52.800v6.400M2.800 56h6.400" stroke="#8a8a8a" stroke-width="2.200"/></svg>
<div class="abs" style="left:1319px;top:49px;width:14px;height:14px;border-radius:4px 0 0 4px;background:rgba(0,0,0,.18)"></div>
<svg class="abs" style="left:1319px;top:49px" width="14" height="14" viewBox="1319 49 14 14"><path d="M1326 52.800v6.400M1322.800 56h6.400" stroke="#a2a2a2" stroke-width="2.200"/></svg>
<svg class="abs" style="left:0;top:684px" width="50" height="40" viewBox="0 684 50 40" shape-rendering="crispEdges">
<path d="M26 715.500L3.500 710.500" stroke="#00dc00" stroke-width="2"/>
<path d="M26 715.500L35 700.500" stroke="#dc0000" stroke-width="2"/>
<path d="M26 716V696" stroke="#0000dc" stroke-width="2"/>
</svg>
<div class="t" style="left:5px;top:699px;color:#00dc00;letter-spacing:0">y</div>
<div class="t" style="left:36px;top:689px;color:#dc0000;letter-spacing:0">x</div>
<div class="t" style="left:28px;top:684px;color:#2a2aff;letter-spacing:0">z</div>

</body></html>
